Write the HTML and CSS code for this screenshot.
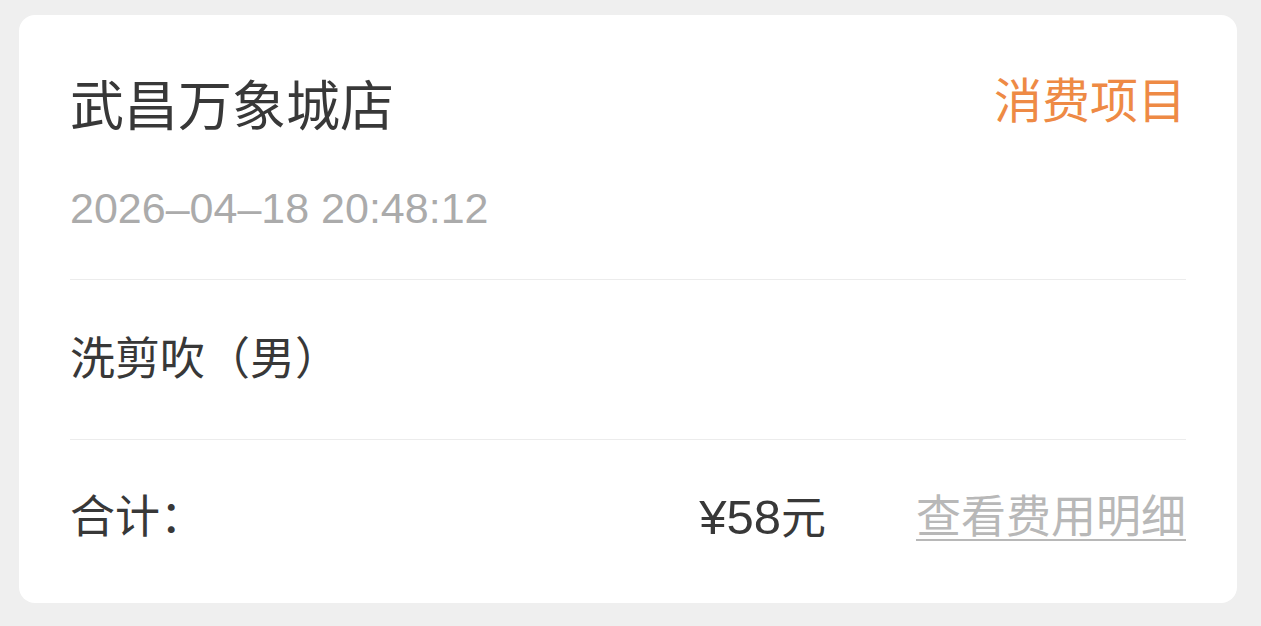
FILE: index.html
```html
<!DOCTYPE html>
<html lang="zh-CN">
<head>
    <meta charset="UTF-8">
    <meta name="viewport" content="width=device-width, initial-scale=1.0">
    <title>消费记录</title>
    <link rel="stylesheet" href="styles.css">
</head>
<body>
    <div class="card">
        <div class="section head">
            <div class="head-row">
                <div class="shop">武昌万象城店</div>
                <div class="tag">消费项目</div>
            </div>
            <div class="time">2026–04–18 20:48:12</div>
        </div>

        <div class="section item">
            <div class="item-name">洗剪吹（男）</div>
        </div>

        <div class="section total">
            <div class="total-label">合计：</div>
            <div class="total-right">
                <span class="price"><span class="amount">¥58</span>元</span>
                <a class="detail" href="#">查看费用明细</a>
            </div>
        </div>
    </div>
</body>
</html>
```

FILE: styles.css
```css
body {
    margin: 0;
    padding: 15px 24px 23px 19px;
    background-color: #efefef;
    font-family: "Liberation Sans", "Noto Sans CJK SC", sans-serif;
}
.card {
    background-color: #ffffff;
    border-radius: 16px;
    height: 588px;
    padding: 0 51px;
    box-sizing: border-box;
}
.section {
    border-bottom: 1px solid #ececec;
}
.section:last-child {
    border-bottom: none;
}
.head {
    padding: 62px 0 41px;
}
.head-row {
    display: flex;
    justify-content: space-between;
    align-items: flex-start;
}
.shop {
    font-size: 54px;
    line-height: 60px;
    color: #383838;
}
.tag {
    font-size: 48px;
    line-height: 50px;
    color: #ee8a45;
}
.time {
    margin-top: 41px;
    font-size: 43px;
    line-height: 60px;
    color: #ababab;
}
.item {
    height: 159px;
    display: flex;
    align-items: center;
}
.item-name {
    font-size: 45px;
    line-height: 60px;
    color: #383838;
}
.total {
    display: flex;
    justify-content: space-between;
    align-items: center;
    padding-top: 47px;
    font-size: 45px;
    line-height: 60px;
}
.total-label {
    color: #383838;
}
.total-right {
    display: flex;
    align-items: center;
    gap: 90px;
}
.price {
    color: #383838;
}
.amount {
    font-size: 49px;
}
.detail {
    color: #b8b8b8;
    text-decoration: underline;
    text-decoration-thickness: 2px;
    text-underline-offset: 6px;
}
```
